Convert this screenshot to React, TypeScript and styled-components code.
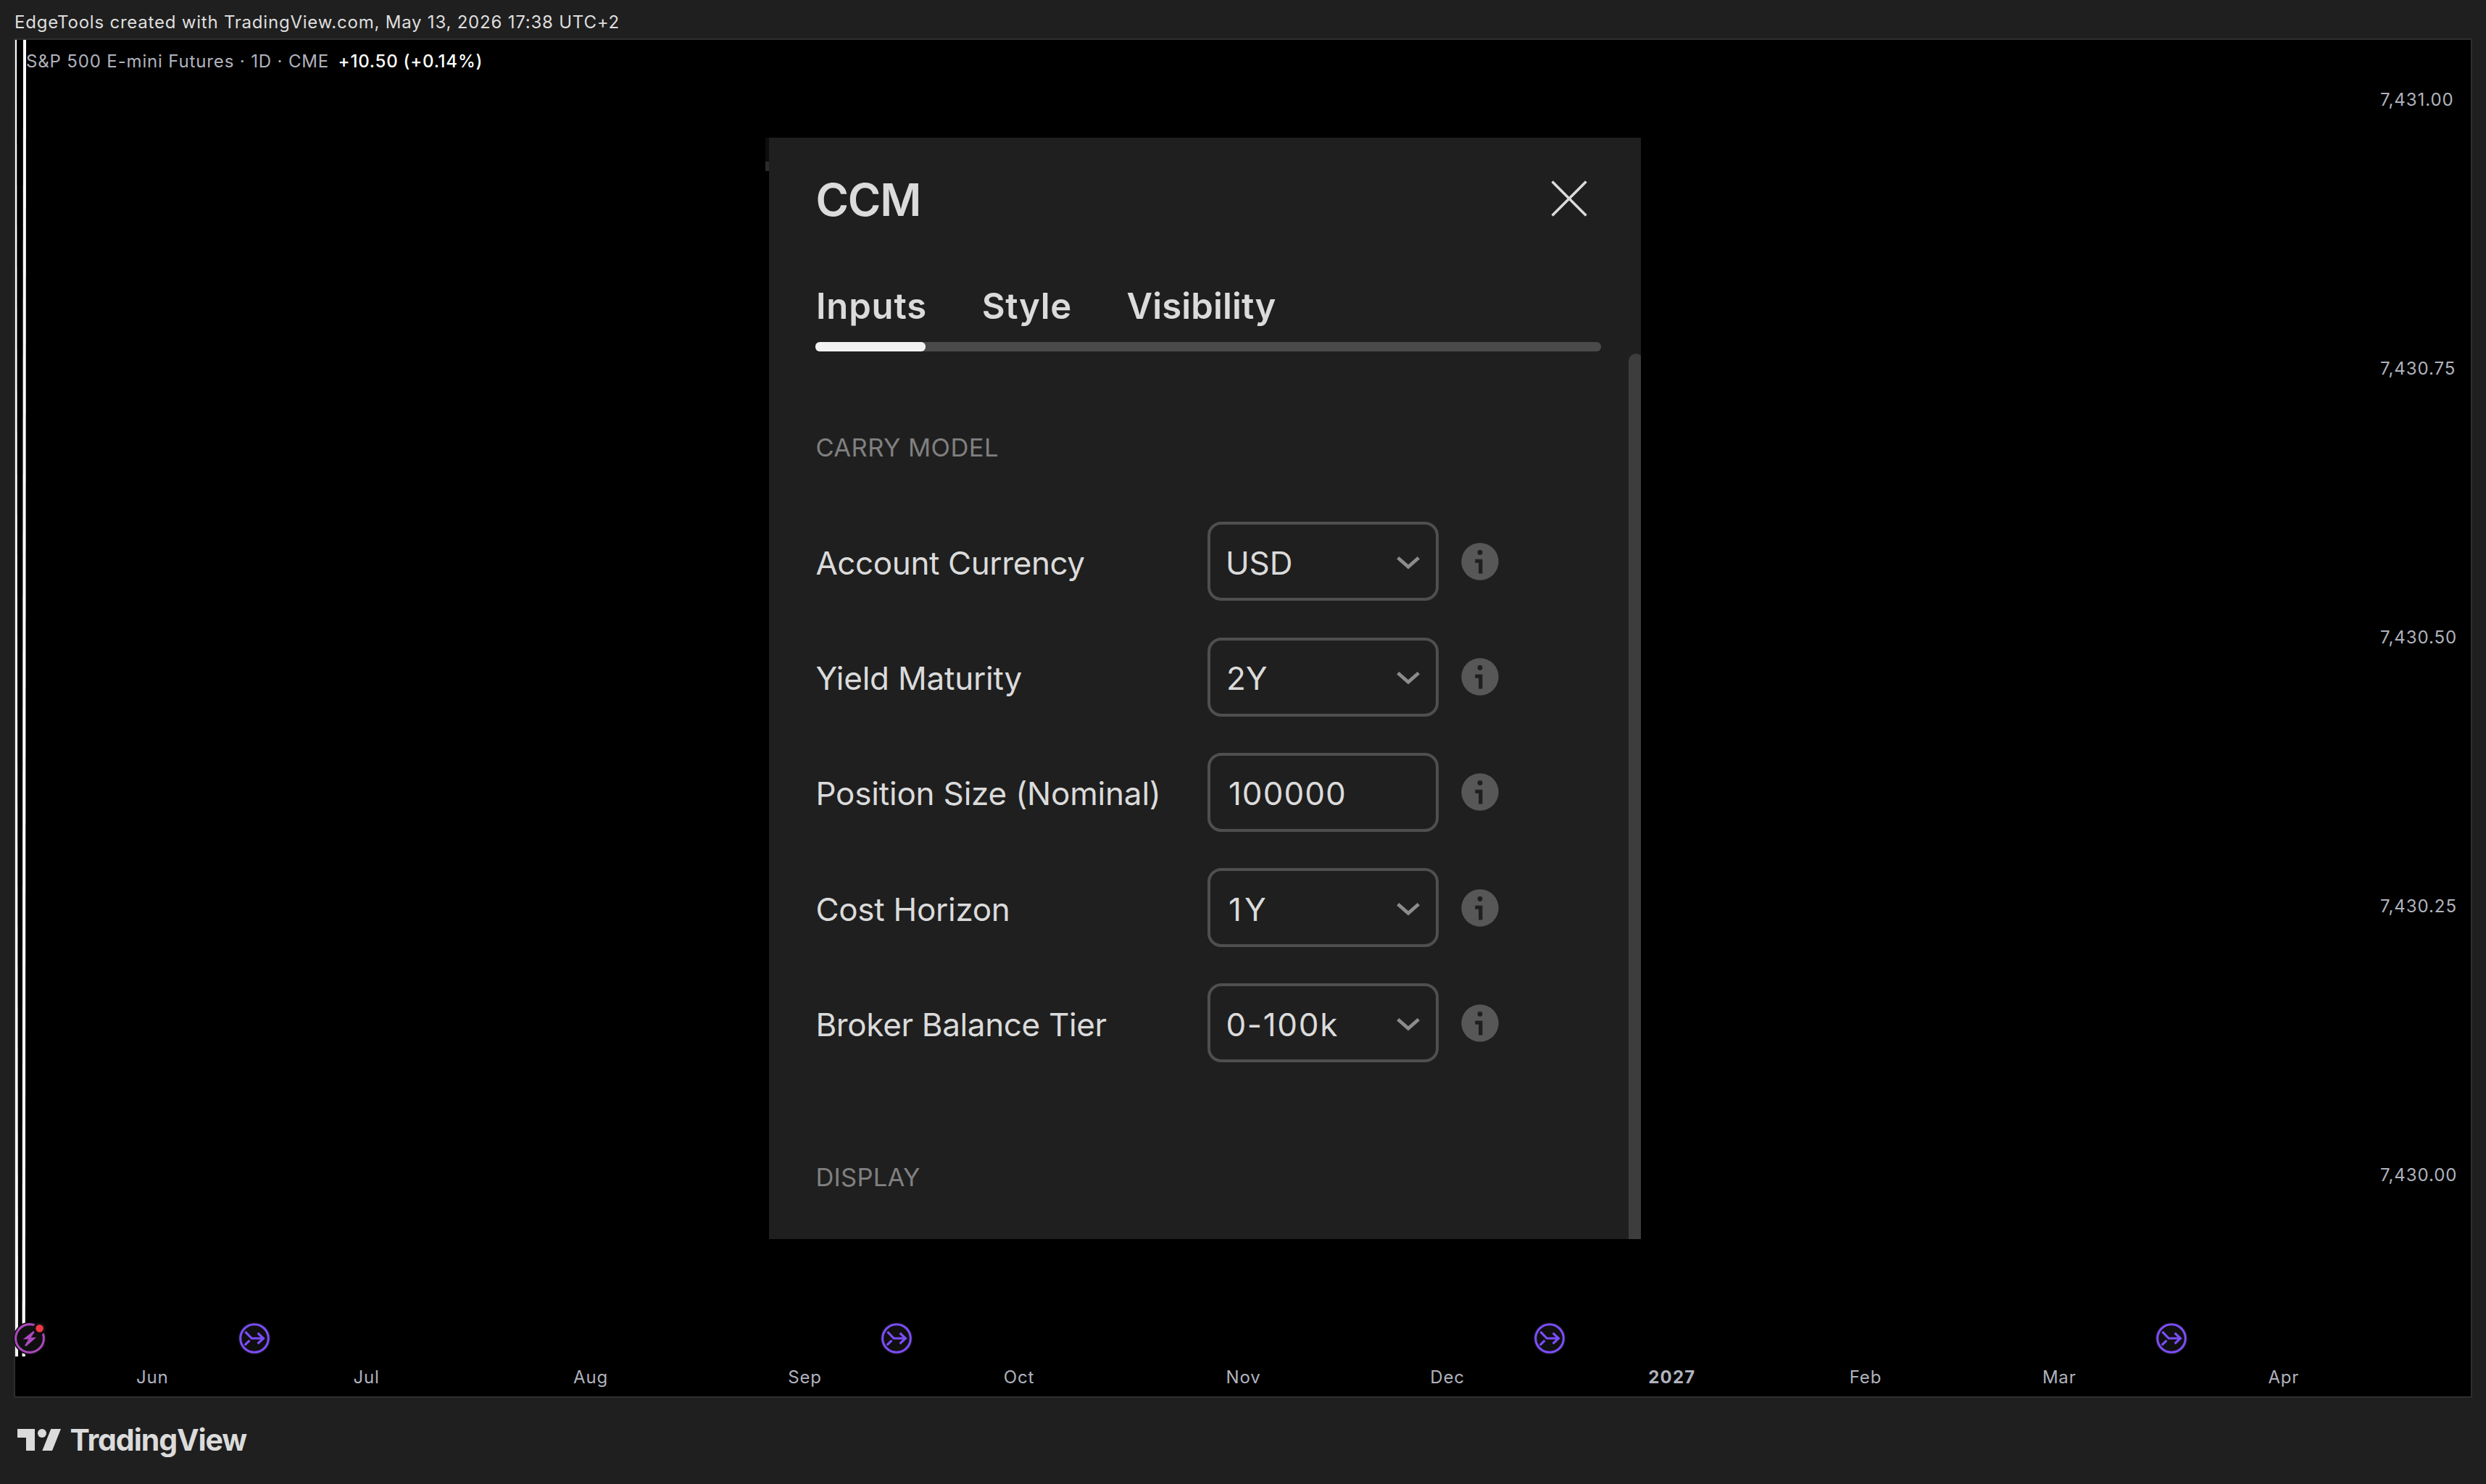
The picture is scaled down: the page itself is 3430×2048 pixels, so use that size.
import React from "react";
import styled, { createGlobalStyle } from "styled-components";

const GlobalStyle = createGlobalStyle`
  * { box-sizing: border-box; }
  body {
    margin: 0;
    background: #1f1f1f;
    font-family: Inter, "Liberation Sans", sans-serif;
    overflow: hidden;
  }
`;

const Page = styled.div`
  display: flex;
  flex-direction: column;
  width: 3430px;
  height: 2048px;
  background: #1f1f1f;
`;

/* ---------- top caption ---------- */

const Caption = styled.header`
  height: 53px;
  padding: 16px 0 0 20px;
  color: #dedede;
  font-size: 24px;
  line-height: 29px;
  letter-spacing: 0.78px;
  white-space: pre;
`;

/* ---------- chart ---------- */

const Chart = styled.main`
  position: relative;
  display: grid;
  grid-template-columns: 1fr 125px;
  grid-template-rows: 1817px 55px;
  width: 3392px;
  height: 1876px;
  margin-left: 19px;
  border: 2px solid #2e2e2e;
  background: #000;
`;

const Pane = styled.section`
  position: relative;
  grid-column: 1;
  grid-row: 1;
`;

const Legend = styled.div`
  display: flex;
  gap: 14px;
  padding: 15px 0 0 15px;
  font-size: 24px;
  line-height: 29px;
  white-space: pre;
`;

const SymbolName = styled.span`
  position: relative;
  width: 416.6px;
  color: #b0b2bd;
  letter-spacing: 0.85px;
`;

const Change = styled.span`
  position: relative;
  color: #fff;
  font-weight: 500;
  letter-spacing: 0.78px;
`;

const PlotLines = styled.svg`
  position: absolute;
  left: 0;
  top: 0;
  display: block;
`;

const EventMark = styled.svg<{ $x: number }>`
  position: absolute;
  left: ${(p) => p.$x - 24}px;
  top: 1768px;
  width: 48px;
  height: 48px;
  overflow: visible;
`;

const PriceAxis = styled.aside`
  grid-column: 2;
  grid-row: 1 / span 2;
  display: flex;
  flex-direction: column;
  gap: 342px;
  padding-top: 68px;
`;

const Price = styled.span`
  color: #b0b2bd;
  font-size: 24px;
  line-height: 29px;
  letter-spacing: 0.93px;
  white-space: pre;
`;

const TimeAxis = styled.div`
  position: relative;
  grid-column: 1;
  grid-row: 2;
`;

const Tick = styled.span<{ $x: number; $strong?: boolean }>`
  position: absolute;
  left: ${(p) => p.$x}px;
  top: 14px;
  transform: translateX(-50%);
  color: #b0b2bd;
  font-size: 24px;
  line-height: 29px;
  font-weight: ${(p) => (p.$strong ? 700 : 400)};
  letter-spacing: ${(p) => (p.$strong ? 1.19 : 0.8)}px;
  white-space: pre;
`;

/* ---------- settings dialog ---------- */

const Floating = styled.div`
  position: absolute;
  left: 1034.6px;
  top: 135px;
  display: flex;
`;

const EdgeStrip = styled.div`
  width: 5.8px;
`;

const EdgePiece = styled.div<{ $h: number; $c: string }>`
  height: ${(p) => p.$h}px;
  background: ${(p) => p.$c};
`;

const Dialog = styled.section`
  position: relative;
  width: 1202.2px;
  height: 1520px;
  padding: 48px 54.2px 0 64px;
  overflow: hidden;
  background: #1f1f1f;
  color: #dbdbdb;
`;

const DialogHead = styled.div`
  display: flex;
  justify-content: space-between;
  align-items: flex-start;
  height: 75px;
`;

const Title = styled.h1`
  margin: 0;
  font-size: 62px;
  line-height: 75px;
  font-weight: 600;
  letter-spacing: -1.2px;
`;

const CloseIcon = styled.svg`
  width: 50px;
  height: 50px;
  margin: 11px 19.3px 0 0;
`;

const Tabs = styled.nav`
  display: flex;
  gap: 75.7px;
  height: 59px;
  margin-top: 80px;
  padding-left: 0.5px;
`;

const Tab = styled.span<{ $ls: number }>`
  font-size: 49px;
  line-height: 59px;
  font-weight: 600;
  letter-spacing: ${(p) => p.$ls}px;
`;

const TabTrack = styled.div`
  height: 13px;
  margin-top: 20px;
  border-radius: 6px;
  background: #4a4a4a;
`;

const TabIndicator = styled.div`
  width: 151.4px;
  height: 13px;
  border-radius: 6px;
  background: #f2f2f2;
`;

const GroupTitle = styled.h2<{ $gap: number; $ls: number }>`
  margin: ${(p) => p.$gap}px 0 0;
  color: #808080;
  font-size: 34.5px;
  line-height: 41px;
  font-weight: 400;
  letter-spacing: ${(p) => p.$ls}px;
`;

const Fields = styled.div`
  display: flex;
  flex-direction: column;
  gap: 50.3px;
  margin-top: 82.3px;
`;

const Field = styled.div`
  display: grid;
  grid-template-columns: 540.3px 319px 52px;
  align-items: center;
  height: 109px;
`;

const FieldLabel = styled.label<{ $ls: number }>`
  padding-top: 4px;
  font-size: 44px;
  line-height: 54px;
  letter-spacing: ${(p) => p.$ls}px;
  white-space: nowrap;
`;

const Control = styled.div`
  display: flex;
  align-items: center;
  justify-content: space-between;
  height: 109px;
  padding: 4px 22px 0 21.2px;
  border: 4px solid #4f4f4f;
  border-radius: 19px;
`;

const Value = styled.span<{ $dx: number; $ls: number }>`
  padding-left: ${(p) => p.$dx}px;
  font-size: 44px;
  line-height: 54px;
  letter-spacing: ${(p) => p.$ls}px;
`;

const Chevron = styled.svg`
  width: 32px;
  height: 18px;
`;

const InfoIcon = styled.svg`
  width: 52px;
  height: 52px;
  margin-left: 31px;
`;

const Scrollbar = styled.div`
  position: absolute;
  top: 297.7px;
  right: -3.5px;
  width: 19.9px;
  height: 1300px;
  border-radius: 10px;
  background: #3d3d3d;
`;

/* ---------- footer ---------- */

const Footer = styled.footer`
  display: flex;
  align-items: flex-start;
  padding: 33px 0 0 24px;
  color: #dbdbdb;
`;

const LogoMark = styled.svg`
  width: 60px;
  height: 30px;
  margin-top: 10px;
`;

const Wordmark = styled.span`
  margin-left: 12.5px;
  font-size: 41px;
  line-height: 50px;
  font-weight: 700;
  letter-spacing: -1.07px;
  font-feature-settings: "cv11";
`;

/* ---------- data ---------- */

const prices = ["7,431.00", "7,430.75", "7,430.50", "7,430.25", "7,430.00"];

const ticks: { label: string; x: number; strong?: boolean }[] = [
  { label: "Jun", x: 210.2 },
  { label: "Jul", x: 505.5 },
  { label: "Aug", x: 815 },
  { label: "Sep", x: 1110.5 },
  { label: "Oct", x: 1406 },
  { label: "Nov", x: 1715.5 },
  { label: "Dec", x: 1997 },
  { label: "2027", x: 2306.8, strong: true },
  { label: "Feb", x: 2574 },
  { label: "Mar", x: 2841.2 },
  { label: "Apr", x: 3150.8 },
];

const rolls = [350.7, 1236.6, 2138, 2996];

type FieldData = {
  label: string;
  labelLs: number;
  value: string;
  valueLs: number;
  dx: number;
  select: boolean;
};

const fields: FieldData[] = [
  { label: "Account Currency", labelLs: -0.4, value: "USD", valueLs: 0, dx: 0, select: true },
  { label: "Yield Maturity", labelLs: -0.22, value: "2Y", valueLs: 0, dx: 1, select: true },
  { label: "Position Size (Nominal)", labelLs: -0.19, value: "100000", valueLs: 1.05, dx: 4, select: false },
  { label: "Cost Horizon", labelLs: -0.28, value: "1Y", valueLs: 4.2, dx: 4, select: true },
  { label: "Broker Balance Tier", labelLs: -0.35, value: "0-100k", valueLs: 1.7, dx: 0.5, select: true },
];

/* ---------- parts ---------- */

function RollMark({ x }: { x: number }) {
  return (
    <EventMark $x={x - 21} viewBox="-24 -24 48 48">
      <circle r="22.6" fill="#0f0f0f" />
      <circle r="19.3" fill="none" stroke="#7c4dff" strokeWidth="3.1" />
      <g fill="none" stroke="#7c4dff" strokeWidth="3.2">
        <path d="M-12.6 -9.2 L-3.8 0 H12.6" />
        <path d="M4.6 -7.4 L12.4 0 L4.6 7.4" />
        <path d="M-13.3 9.3 L-6.6 2.8" />
      </g>
    </EventMark>
  );
}

function FlashMark({ x }: { x: number }) {
  return (
    <EventMark $x={x - 21} viewBox="-24 -24 48 48">
      <circle r="22.6" fill="#0f0f0f" />
      <circle r="19.4" fill="none" stroke="#ab47bc" strokeWidth="3.1" />
      <path d="M5.2 -10.2 L-9.3 1.3 H-1.6 L-6.9 9.6 L-5.2 11.2 L9.2 -1.3 H1.7 L7 -9 Z" fill="#ab47bc" />
      <circle cx="13.6" cy="-13.8" r="8.8" fill="#0f0f0f" />
      <circle cx="13.6" cy="-13.8" r="5.3" fill="#f23645" />
    </EventMark>
  );
}

function FieldRow({ field }: { field: FieldData }) {
  return (
    <Field>
      <FieldLabel $ls={field.labelLs}>{field.label}</FieldLabel>
      <Control>
        <Value $dx={field.dx} $ls={field.valueLs}>
          {field.value}
        </Value>
        {field.select && (
          <Chevron viewBox="0 0 32 18">
            <path d="M1.7 1.8 L16 14.4 L30.3 1.8" fill="none" stroke="#8c8c8c" strokeWidth="4.8" />
          </Chevron>
        )}
      </Control>
      <InfoIcon viewBox="-26 -26 52 52">
        <circle r="25.7" fill="#575757" />
        <circle cy="-12.6" r="3.4" fill="#1f1f1f" />
        <path d="M-6.7 -3.2 H3.4 V16.4 H-1.9 V1.8 H-6.7 Z" fill="#1f1f1f" />
      </InfoIcon>
    </Field>
  );
}

export default function App() {
  return (
    <Page>
      <GlobalStyle />
      <Caption>EdgeTools created with TradingView.com, May 13, 2026 17:38 UTC+2</Caption>

      <Chart>
        <Pane>
          <PlotLines width="40" height="1817" viewBox="0 0 40 1817">
            <path d="M0 0 H2 L4 1817 H0 Z" fill="#fff" />
            <path d="M11 0 H15 L13.8 1817 H9.6 Z" fill="#fff" />
          </PlotLines>
          <Legend>
            <SymbolName>S&amp;P 500 E-mini Futures · 1D · CME</SymbolName>
            <Change>+10.50 (+0.14%)</Change>
          </Legend>
          <FlashMark x={41.2} />
          {rolls.map((x) => (
            <RollMark key={x} x={x} />
          ))}
        </Pane>

        <PriceAxis>
          {prices.map((p) => (
            <Price key={p}>{p}</Price>
          ))}
        </PriceAxis>

        <TimeAxis>
          {ticks.map((t) => (
            <Tick key={t.label} $x={t.x - 21} $strong={t.strong}>
              {t.label}
            </Tick>
          ))}
        </TimeAxis>

        <Floating>
          <EdgeStrip>
            <EdgePiece $h={33} $c="#0d0d0d" />
            <EdgePiece $h={13.3} $c="#2b2b2b" />
          </EdgeStrip>
          <Dialog>
            <DialogHead>
              <Title>CCM</Title>
              <CloseIcon viewBox="0 0 50 50">
                <path d="M1.6 1.6 L48.4 48.4 M48.4 1.6 L1.6 48.4" stroke="#dbdbdb" strokeWidth="3.6" />
              </CloseIcon>
            </DialogHead>
            <Tabs>
              <Tab $ls={0.857}>Inputs</Tab>
              <Tab $ls={0.62}>Style</Tab>
              <Tab $ls={0.154}>Visibility</Tab>
            </Tabs>
            <TabTrack>
              <TabIndicator />
            </TabTrack>
            <GroupTitle $gap={112} $ls={0.43}>CARRY MODEL</GroupTitle>
            <Fields>
              {fields.map((f) => (
                <FieldRow key={f.label} field={f} />
              ))}
            </Fields>
            <GroupTitle $gap={137.5} $ls={0.25}>DISPLAY</GroupTitle>
            <Scrollbar />
          </Dialog>
        </Floating>
      </Chart>

      <Footer>
        <LogoMark viewBox="0 0 60 30">
          <path d="M0 0 H24 V30 H12 V12 H0 Z" fill="#dbdbdb" />
          <circle cx="34" cy="6" r="6" fill="#dbdbdb" />
          <path d="M46.3 0 H60 L48 30 H34.3 Z" fill="#dbdbdb" />
        </LogoMark>
        <Wordmark>TradingView</Wordmark>
      </Footer>
    </Page>
  );
}
